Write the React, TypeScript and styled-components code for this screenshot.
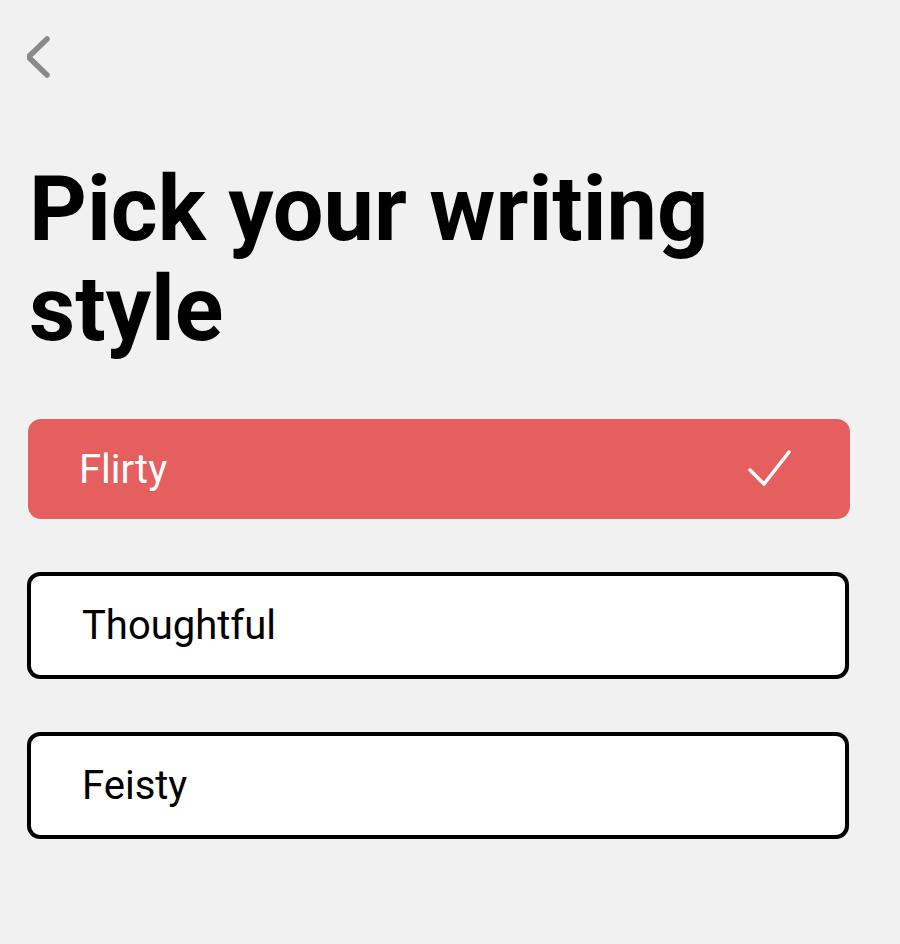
import React, { useState } from 'react';
import styled, { createGlobalStyle } from 'styled-components';

const GlobalStyle = createGlobalStyle`
  html, body {
    margin: 0;
    padding: 0;
    background: #f1f1f1;
  }
  body {
    font-family: Roboto, "Liberation Sans", sans-serif;
  }
`;

const Page = styled.div`
  min-height: 944px;
  box-sizing: border-box;
  padding: 32px 51px 0 27px;
  background: #f1f1f1;
`;

const BackButton = styled.button`
  display: flex;
  align-items: center;
  width: 30px;
  height: 50px;
  padding: 0;
  border: none;
  background: transparent;
  cursor: pointer;
`;

const Title = styled.h1`
  margin: 78px 0 0 2px;
  font-size: 90px;
  line-height: 100px;
  font-weight: 700;
  color: #000;
  letter-spacing: 0;
`;

const Options = styled.div`
  display: flex;
  flex-direction: column;
  gap: 53px;
  margin-top: 59px;
`;

const Option = styled.button<{ $selected: boolean }>`
  display: flex;
  align-items: center;
  justify-content: space-between;
  box-sizing: border-box;
  width: 822px;
  height: ${p => (p.$selected ? '100px' : '107px')};
  margin-left: ${p => (p.$selected ? '1px' : '0')};
  padding: 0 57px 0 51px;
  border-radius: 13px;
  border: ${p => (p.$selected ? 'none' : '4px solid #000')};
  background: ${p => (p.$selected ? '#e65f5f' : '#fff')};
  color: ${p => (p.$selected ? '#fff' : '#000')};
  font-family: Roboto, "Liberation Sans", sans-serif;
  font-size: 40px;
  font-weight: 400;
  text-align: left;
  cursor: pointer;
`;

const CheckMark = () => (
  <svg width="46" height="42" viewBox="0 0 46 42" fill="none">
    <path d="M3 22 L17 36 L42 4" stroke="#fff" strokeWidth="3.5" strokeLinecap="round" strokeLinejoin="round" />
  </svg>
);

const styles = ['Flirty', 'Thoughtful', 'Feisty'];

export default function App() {
  const [selected, setSelected] = useState('Flirty');

  return (
    <Page>
      <GlobalStyle />
      <BackButton aria-label="Back">
        <svg width="30" height="48" viewBox="0 0 30 48" fill="none">
          <path d="M20 6 L1.5 24 L20 42" stroke="#8a8a8a" strokeWidth="5.5" strokeLinecap="round" strokeLinejoin="round" />
        </svg>
      </BackButton>
      <Title>
        Pick your writing
        <br />
        style
      </Title>
      <Options>
        {styles.map(name => (
          <Option key={name} $selected={selected === name} onClick={() => setSelected(name)}>
            <span>{name}</span>
            {selected === name && <CheckMark />}
          </Option>
        ))}
      </Options>
    </Page>
  );
}
